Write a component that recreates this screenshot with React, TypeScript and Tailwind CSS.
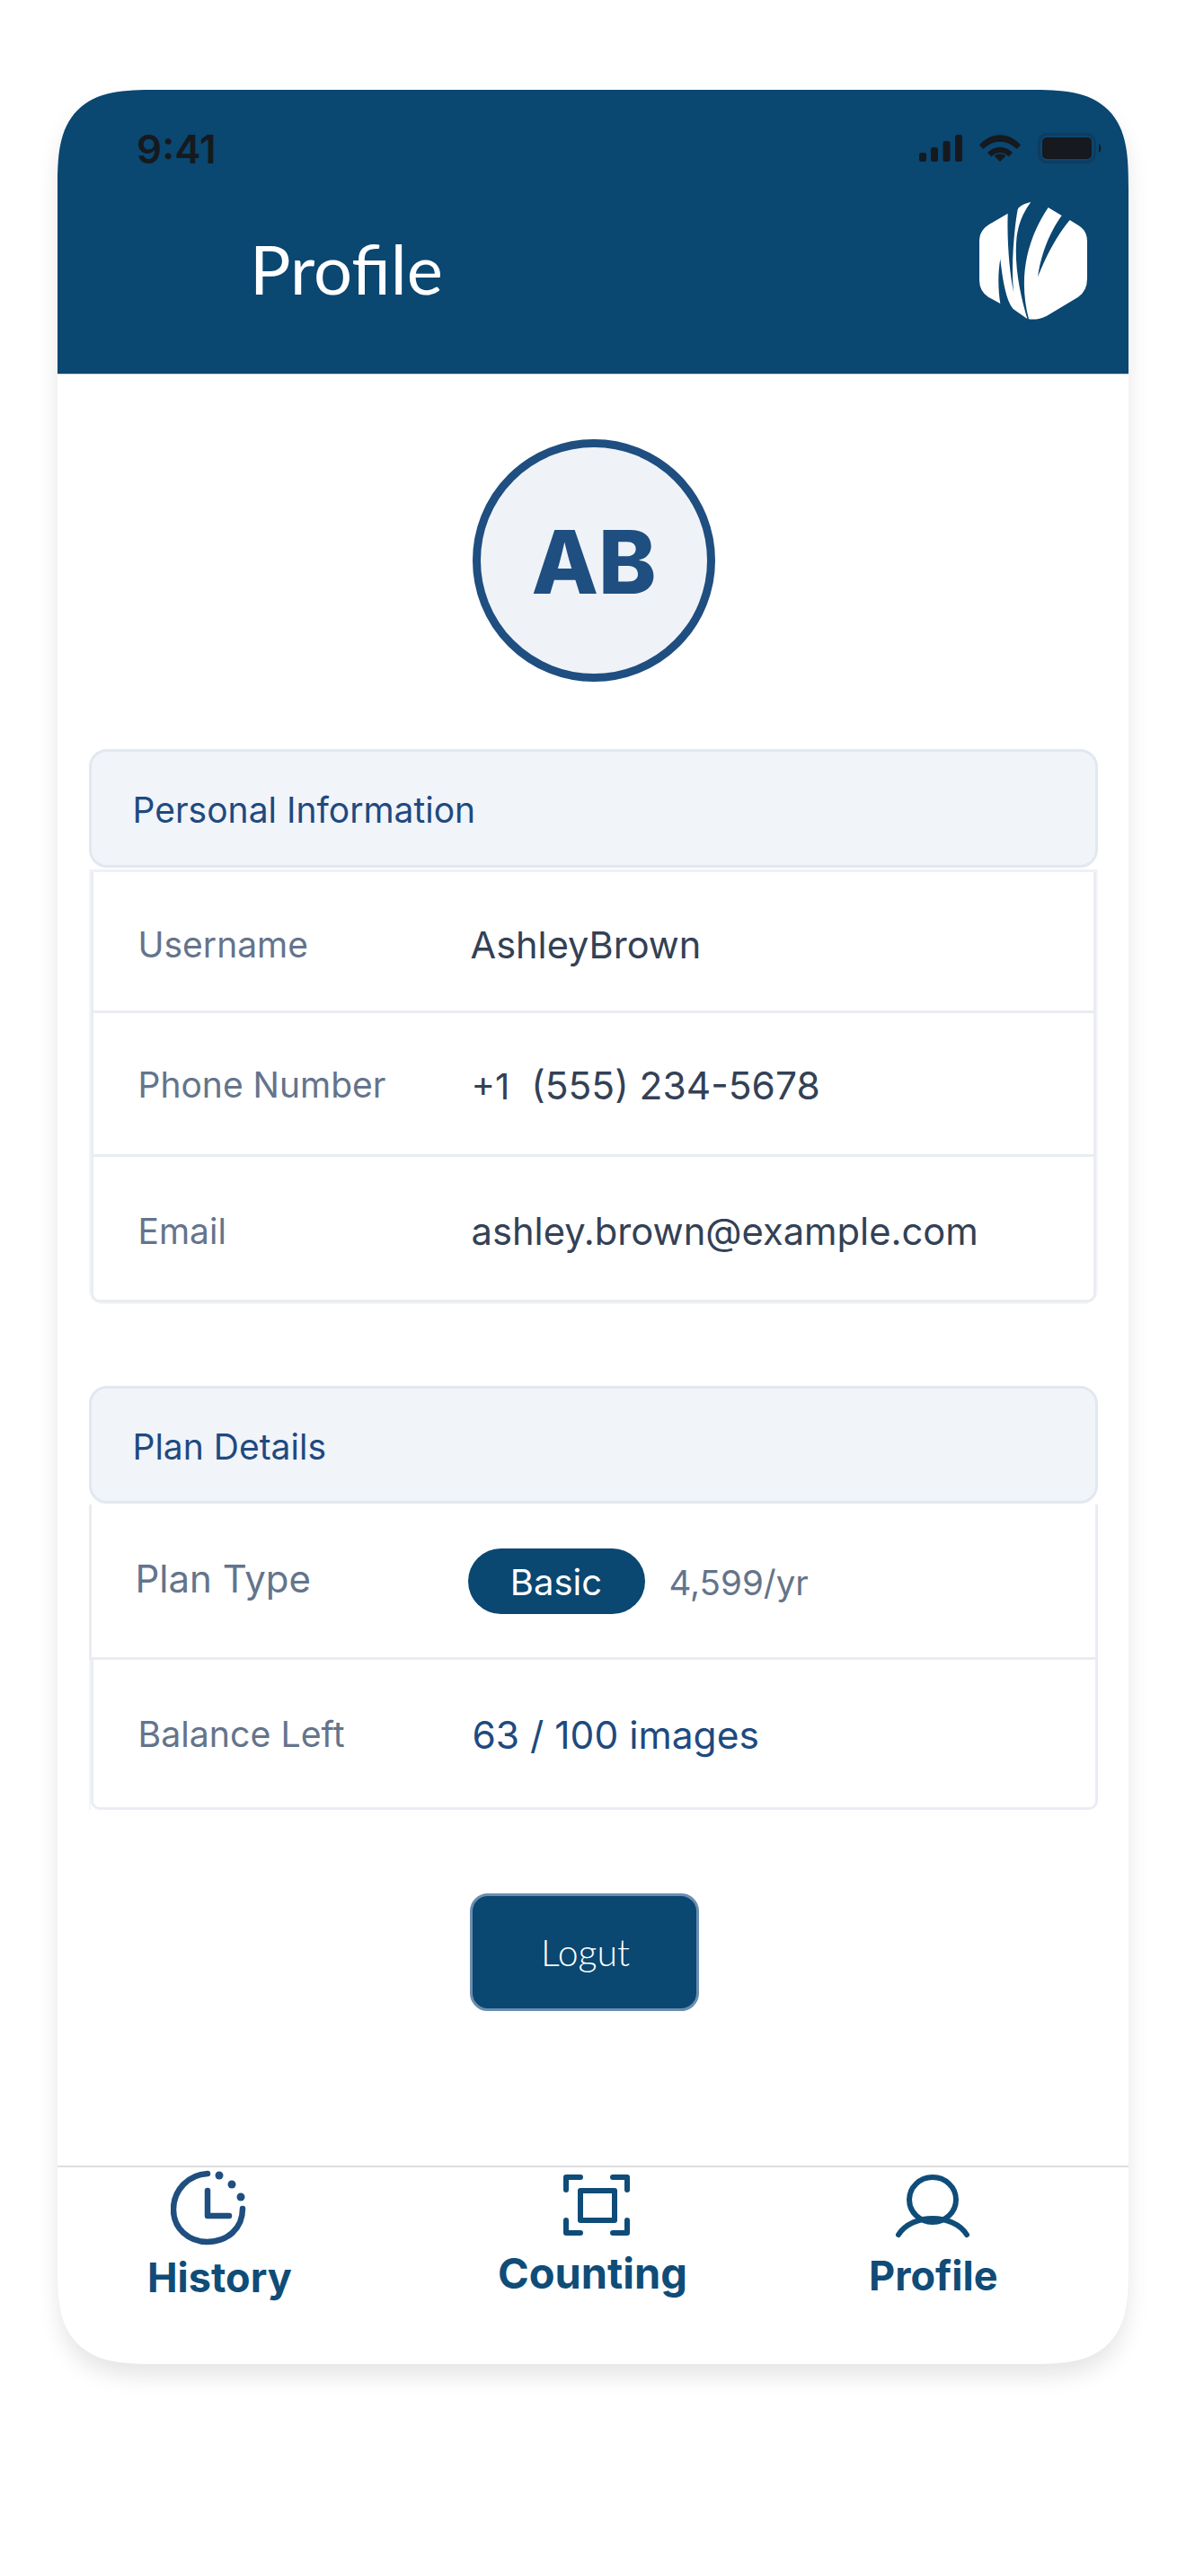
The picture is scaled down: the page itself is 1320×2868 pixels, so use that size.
import React from "react";

function Signal() {
  return (
    <svg width="48" height="30" viewBox="0 0 48 30" fill="#16191e">
      <rect x="0" y="20" width="8" height="10" rx="2.5" />
      <rect x="13" y="14" width="8" height="16" rx="2.5" />
      <rect x="26.5" y="7" width="8" height="23" rx="2.5" />
      <rect x="40" y="0" width="8" height="30" rx="2.5" />
    </svg>
  );
}

function Wifi() {
  return (
    <svg width="46" height="30" viewBox="0 0 46 30" fill="#16191e">
      <path d="M0 11.5 C13 -3.5 33 -3.5 46 11.5 L41.5 16 C31 5 15 5 4.500 16 Z" />
      <path d="M9 20 C17 11.5 29 11.5 37 20 L32.500 24.500 C27.500 18.500 18.500 18.500 13.500 24.500 Z" />
      <path d="M16.500 23.500 C20 20.500 26 20.500 29.500 23.500 L23 30 Z" />
    </svg>
  );
}

function Battery() {
  return (
    <svg width="72" height="34" viewBox="0 0 72 34">
      <rect x="1.500" y="1.500" width="62" height="31" rx="9" fill="none" stroke="#0f3c5f" strokeWidth="3" />
      <rect x="5" y="5" width="55" height="24" rx="5" fill="#16191e" />
      <path d="M68 12 C71 13 71 21 68 22 Z" fill="#16191e" />
    </svg>
  );
}

function Logo() {
  return (
    <svg width="120" height="131" viewBox="90 75 360 393" fill="#ffffff">
      <path d="M185 113 L122 150 Q90 170 90 205 V335 Q90 372 120 392 L160 414 C152 365 152 310 160 265 C168 340 180 405 203 432 L250 465 C225 380 205 280 215 190 C222 140 240 105 262 75 C245 78 222 88 218 100 C205 170 195 300 205 378 C190 310 182 200 185 113 Z" />
      <path d="M255 466 C225 350 235 220 320 93 L365 120 C325 175 295 250 285 325 C315 250 350 185 392 135 L420 152 Q450 170 450 205 V330 Q450 372 420 392 L315 455 Q285 470 255 466 Z" />
    </svg>
  );
}

function HistoryIcon() {
  return (
    <svg width="84" height="84" viewBox="0 0 84 84" fill="none" stroke="#1f4e80" strokeWidth="6.500" strokeLinecap="round" strokeLinejoin="round">
      <path d="M41 4 C20 5 3 22 3 44 C3 65 20 80 41 80 C63 80 80 65 80 43" />
      <path d="M41 23 V51 H65" />
      <circle cx="54" cy="6" r="4.500" fill="#1f4e80" stroke="none" />
      <circle cx="68" cy="16" r="4.500" fill="#1f4e80" stroke="none" />
      <circle cx="78" cy="30" r="4.500" fill="#1f4e80" stroke="none" />
    </svg>
  );
}

function ScanIcon() {
  return (
    <svg width="74" height="68" viewBox="0 0 74 68" fill="none" stroke="#0f4c78" strokeWidth="6" strokeLinecap="round" strokeLinejoin="round">
      <path d="M3 17 V3 H19" />
      <path d="M55 3 H71 V17" />
      <path d="M3 51 V65 H19" />
      <path d="M55 65 H71 V51" />
      <rect x="19" y="18" width="38" height="33" />
    </svg>
  );
}

function UserIcon() {
  return (
    <svg width="84" height="72" viewBox="0 0 84 72" fill="none" stroke="#0f4c78" strokeWidth="6" strokeLinecap="round">
      <ellipse cx="42" cy="28" rx="26" ry="25" />
      <path d="M4 67 C19 43 65 43 80 67" />
    </svg>
  );
}

function Row({ height, pt, label, labelClass, value, last }: { height: string; pt: string; label: string; labelClass?: string; value: React.ReactNode; last?: boolean }) {
  return (
    <div className={`flex items-center border-x-[3px] border-b-[3px] border-[#e9edf2] pl-[50px] ${height} ${pt} ${last ? "rounded-b-[10px]" : ""}`}>
      <div className={`shrink-0 whitespace-nowrap text-[#64748b] ${labelClass ?? "w-[368px] text-[39px]"}`}>{label}</div>
      {value}
    </div>
  );
}

export default function App() {
  return (
    <div className="min-h-[2868px] w-[1320px] bg-white px-[64px] pt-[100px] font-['Inter',sans-serif]">
      <div className="flex h-[2532px] w-[1192px] flex-col overflow-hidden rounded-[110px] bg-white shadow-[0_14px_24px_rgba(0,0,0,0.1)] [corner-shape:superellipse(1.6)]">
        <header className="h-[317px] shrink-0 border-b-[1px] border-[#c9d6e2] bg-[#0a4771]">
          <div className="flex h-[88px] items-end justify-between pl-[88px] pr-[29px]">
            <span className="translate-y-[3px] text-[44px] font-semibold leading-[50px] text-[#16191e]">9:41</span>
            <div className="flex items-center gap-[19px] pb-[6px]">
              <Signal />
              <Wifi />
              <Battery />
            </div>
          </div>
          <div className="flex items-start justify-between pl-[214px] pr-[46px] pt-[37px]">
            <h1 className="pt-[34px] font-['Lato',sans-serif] text-[76px] font-normal leading-[80px] text-white">Profile</h1>
            <Logo />
          </div>
        </header>

        <main className="flex flex-1 flex-col items-center pt-[72px]">
          <div className="flex h-[270px] w-[270px] translate-x-[1px] items-center justify-center rounded-full border-[9px] border-[#1f4e80] bg-[#eff3f8]">
            <span className="pt-[3px] text-[97px] font-extrabold leading-none text-[#1f4e80]">AB</span>
          </div>

          <section className="mt-[75px] w-[1123px]">
            <div className="flex h-[132px] items-center rounded-[20px] border-[3px] border-[#e2e8f0] bg-[#f1f4f9] pl-[46px]">
              <h2 className="pt-[4px] text-[39px] font-normal text-[#1e4a80]">Personal Information</h2>
            </div>
            <div className="mt-[2px] rounded-b-[16px] border-x-[2px] border-b-[2px] border-[#f3f5f8]">
              <div className="border-t-[3px] border-[#eef1f5]">
                <Row height="h-[157px]" pt="pt-[8px]" label="Username" value={<span className="pl-[2px] text-[41.500px] text-[#334155]">AshleyBrown</span>} />
              </div>
              <Row height="h-[160px]" pt="pt-[4px]" label="Phone Number" value={<span className="whitespace-pre pl-[3px] text-[42.500px] text-[#334155]"><span className="text-[40px]">+1</span>  (555) 234-5678</span>} />
              <Row height="h-[162px]" pt="pt-[7px]" last label="Email" value={<span className="pl-[3px] text-[41.700px] text-[#334155]">ashley.brown@example.com</span>} />
            </div>
          </section>

          <section className="mt-[91px] w-[1123px]">
            <div className="flex h-[131px] items-center rounded-[20px] border-[3px] border-[#e2e8f0] bg-[#f1f4f9] pl-[46px]">
              <h2 className="pt-[6px] text-[39px] font-normal text-[#1e4a80]">Plan Details</h2>
            </div>
            <div className="pt-[1px]">
              <Row
                height="h-[173px]"
                pt="pt-0"
                label="Plan Type"
                labelClass="w-[370px] pb-[6px] text-[42px] -ml-[1px]"
                value={
                  <div className="flex items-center gap-[27px]">
                    <span className="flex h-[73px] w-[197px] items-center justify-center rounded-full bg-[#0a4771] pt-[4px] text-[40px] text-white">Basic</span>
                    <span className="pt-[6px] text-[38.500px] text-[#64748b]">4,599/yr</span>
                  </div>
                }
              />
              <div className="border-l-[2px] border-[#f3f5f8]">
                <Row height="h-[167px]" pt="pt-[3px]" last label="Balance Left" labelClass="w-[372px] text-[39.300px]" value={<span className="text-[42.500px] text-[#1e4a80]">63 / 100 images</span>} />
              </div>
            </div>
          </section>

          <button className="mt-[93px] flex h-[131px] w-[255px] -translate-x-[10px] items-center justify-center rounded-[20px] border-[3px] border-[#6b8db0] bg-[#0a4771] pl-[3px] font-['Lato',sans-serif] text-[41px] font-light text-white">
            Logut
          </button>
        </main>

        <nav className="flex h-[221px] shrink-0 border-t-[2px] border-[#dedede] pl-[100px] pt-[3px]">
          <div className="flex w-[158px] flex-col">
            <div className="ml-[26px] h-[84px]"><HistoryIcon /></div>
            <span className="mt-[8px] whitespace-nowrap text-[45px] font-bold leading-[56px] text-[#0f4c78]">History</span>
          </div>
          <div className="ml-[232px] flex w-[210px] flex-col">
            <div className="ml-[73px] mt-[5px] h-[68px]"><ScanIcon /></div>
            <span className="mt-[14px] whitespace-nowrap text-[47px] font-bold leading-[56px] text-[#0f4c78]">Counting</span>
          </div>
          <div className="ml-[203px] flex w-[144px] flex-col">
            <div className="ml-[29px] mt-[5px] h-[72px]"><UserIcon /></div>
            <span className="mt-[13px] whitespace-nowrap text-[45px] font-bold leading-[56px] text-[#0f4c78]">Profile</span>
          </div>
        </nav>
      </div>
    </div>
  );
}
